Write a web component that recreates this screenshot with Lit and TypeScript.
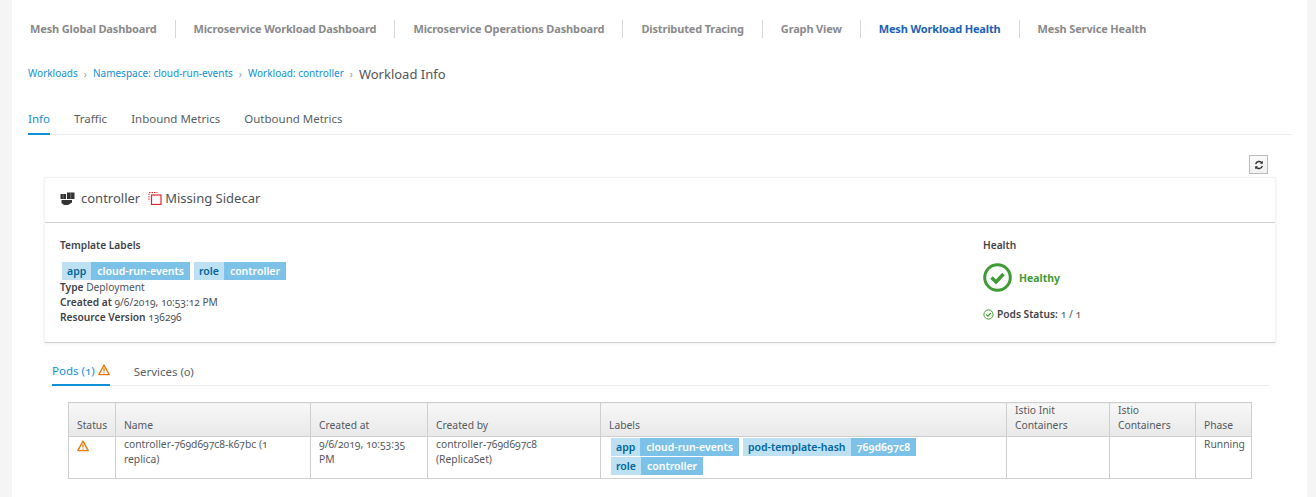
import { LitElement, css, html } from 'lit'
import { customElement } from 'lit/decorators.js'

const navItems = [
  'Mesh Global Dashboard',
  'Microservice Workload Dashboard',
  'Microservice Operations Dashboard',
  'Distributed Tracing',
  'Graph View',
  'Mesh Workload Health',
  'Mesh Service Health',
]

const warnIcon = (size: number) => html`
  <svg class="warn" width=${size} height=${size} viewBox="0 0 12 12">
    <path d="M6 1.2 11.2 10.6H.8Z" fill="#fff" stroke="#ec7a08" stroke-width="1.4" stroke-linejoin="round" />
    <path d="M6 4.2V7.6M6 8.4V9.6" stroke="#ec7a08" stroke-width="1.3" fill="none" />
  </svg>
`

const label = (k: string, v: string) => html`
  <span class="label"><span class="key">${k}</span><span class="val">${v}</span></span>
`

@customElement('app-root')
export class AppRoot extends LitElement {
  static styles = css`
    :host {
      display: block;
      height: 497px;
      overflow: hidden;
      background: #f5f5f5;
      font-family: "Noto Sans", "Open Sans", sans-serif;
      font-size: 11px;
      font-variant-numeric: oldstyle-nums;
      color: #4d5258;
    }
    .page {
      margin: 0 9px 0 12px;
      height: 497px;
      background: #fff;
      padding: 0 15px 0 16px;
      box-sizing: border-box;
    }
    .nav {
      display: flex;
      align-items: center;
      height: 18px;
      padding: 20px 0 0 2px;
    }
    .nav span {
      font-size: 11px;
      letter-spacing: -0.15px;
      font-weight: 700;
      color: #8a8a8a;
      padding: 0 18px;
      border-left: 1px solid #d8d8d8;
      line-height: 18px;
      white-space: nowrap;
    }
    .nav span:first-child {
      padding-left: 0;
      border-left: 0;
    }
    .nav span.active {
      color: #1a62b8;
    }
    .crumbs {
      display: flex;
      align-items: center;
      height: 20px;
      margin-top: 26px;
      font-size: 10px;
      color: #0f91d6;
    }
    .crumbs a {
      padding-bottom: 3px;
    }
    .crumbs i {
      font-style: normal;
      color: #9a9a9a;
      margin: 0 6px;
      font-size: 10px;
    }
    .crumbs b {
      font-weight: 400;
      font-size: 13px;
      color: #555;
    }
    .tabs {
      display: flex;
      height: 34px;
      margin-top: 16px;
      border-bottom: 1px solid #ececec;
      font-size: 11.5px;
      color: #5a5f64;
    }
    .tabs span {
      margin-right: 24px;
      line-height: 38px;
      box-sizing: border-box;
      height: 35px;
    }
    .tabs span.active {
      color: #0f91d6;
      border-bottom: 2px solid #0f91d6;
    }
    .tools {
      display: flex;
      justify-content: flex-end;
      padding: 20px 24px 0 0;
      height: 22px;
    }
    .refresh {
      width: 19px;
      height: 19px;
      box-sizing: border-box;
      border: 1px solid #bbb;
      background: linear-gradient(#fbfbfb, #f0f0f0);
      display: flex;
      align-items: center;
      justify-content: center;
    }
    .card {
      margin: 0 16px;
      height: 166px;
      box-sizing: border-box;
      border: 1px solid #f3f3f3;
      border-bottom: 1px solid #d2d2d2;
      box-shadow: 0 1px 3px rgba(0, 0, 0, 0.06);
    }
    .card-head {
      display: flex;
      align-items: center;
      height: 44px;
      padding-left: 15px;
      border-bottom: 1px solid #d0d0d0;
      font-size: 13px;
      color: #4d5258;
    }
    .card-head > * {
      margin-bottom: 4px;
    }
    .card-head .name {
      margin: 0 8px 4px 6px;
    }
    .card-head .missing {
      margin-left: 3px;
    }
    .card-body {
      display: flex;
      justify-content: space-between;
      padding: 15px 0 0 15px;
      font-size: 10.2px;
    }
    .heading {
      font-weight: 600;
      line-height: 15px;
      color: #3f4347;
    }
    .labels {
      margin: 9px 0 0 2px;
      display: flex;
      gap: 4px;
      flex-wrap: wrap;
    }
    .label {
      display: inline-flex;
      height: 18px;
      line-height: 18px;
      font-weight: 600;
      font-size: 10.5px;
    }
    .key {
      background: #bde0f3;
      color: #00659c;
      padding: 0 5px;
    }
    .val {
      background: #7cc2e8;
      color: #fff;
      padding: 0 6px;
    }
    .meta {
      line-height: 15px;
    }
    .meta b {
      font-weight: 600;
      color: #3f4347;
    }
    .health {
      width: 292px;
    }
    .healthy {
      display: flex;
      align-items: center;
      gap: 7px;
      margin-top: 10px;
      color: #3f9c35;
      font-weight: 700;
      font-size: 10.5px;
    }
    .pods {
      display: flex;
      align-items: center;
      gap: 3px;
      margin-top: 15px;
    }
    .pods b {
      font-weight: 600;
      color: #3f4347;
    }
    .subtabs {
      display: flex;
      height: 42px;
      margin: 0 23px 0 24px;
      border-bottom: 1px solid #ececec;
      font-size: 11.5px;
      color: #5a5f64;
    }
    .subtabs span {
      display: flex;
      align-items: center;
      gap: 3px;
      height: 43px;
      padding-top: 13px;
      box-sizing: border-box;
      margin-right: 24px;
    }
    .subtabs span.active {
      color: #0f91d6;
      border-bottom: 2px solid #0f91d6;
    }
    table {
      border-collapse: collapse;
      table-layout: fixed;
      width: 1183px;
      margin: 16px 0 0 40px;
      font-size: 10.3px;
      line-height: 15px;
      color: #55595e;
    }
    th,
    td {
      border: 1px solid #cfcfcf;
      padding: 0 8px;
      text-align: left;
      vertical-align: top;
      font-weight: 400;
    }
    th {
      height: 33px;
      vertical-align: bottom;
      padding-bottom: 3px;
      box-sizing: border-box;
      background: linear-gradient(#f7f7f7, #e9e9e9);
    }
    td {
      height: 42px;
      padding-top: 0;
      box-sizing: border-box;
    }
    td .labels {
      margin: 0;
      gap: 1px 4px;
    }
    td.labels-cell {
      padding: 1px 5px 0 10px;
    }
    td .warn {
      margin-top: 3px;
    }
  `

  render() {
    return html`
      <div class="page">
        <div class="nav">
          ${navItems.map(
            (n) => html`<span class=${n === 'Mesh Workload Health' ? 'active' : ''}>${n}</span>`,
          )}
        </div>
        <div class="crumbs">
          <a>Workloads</a><i>›</i><a>Namespace: cloud-run-events</a><i>›</i><a>Workload: controller</a><i>›</i><b>Workload Info</b>
        </div>
        <div class="tabs">
          <span class="active">Info</span><span>Traffic</span><span>Inbound Metrics</span><span>Outbound Metrics</span>
        </div>
        <div class="tools">
          <div class="refresh">
            <svg width="10" height="10" viewBox="0 0 12 12" fill="none" stroke="#333" stroke-width="1.7">
              <path d="M2 5A4.2 4.2 0 0 1 9.6 3.6" />
              <path d="M10 7A4.2 4.2 0 0 1 2.4 8.4" />
              <path d="M10.6 1V4.6H7.2Z M1.4 11V7.4H4.8Z" fill="#333" stroke="none" />
            </svg>
          </div>
        </div>
        <div class="card">
          <div class="card-head">
            <svg width="15" height="13" viewBox="0 0 15 13" fill="#333">
              <path d="M.5 2H6V7H.5Z" />
              <path d="M7 .5H14.5V7H7Z" />
              <path d="M1.5 8H12V10.5L8 13H4L1.5 11Z" />
              <path d="M3.2 2.2V6.8M10.7.7V6.8" stroke="#999" stroke-width="0.6" />
            </svg>
            <span class="name">controller</span>
            <svg width="14" height="14" viewBox="0 0 14 14" fill="none" stroke="#e8232a">
              <path d="M1 9V1.5H9.5" stroke-dasharray="1.5 1" />
              <rect x="3.5" y="4" width="9.5" height="9.5" stroke-width="1.2" />
            </svg>
            <span class="missing">Missing Sidecar</span>
          </div>
          <div class="card-body">
            <div>
              <div class="heading">Template Labels</div>
              <div class="labels">${label('app', 'cloud-run-events')}${label('role', 'controller')}</div>
              <div class="meta">
                <div><b>Type</b> Deployment</div>
                <div><b>Created at</b> 9/6/2019, 10:53:12 PM</div>
                <div><b>Resource Version</b> 136296</div>
              </div>
            </div>
            <div class="health">
              <div class="heading">Health</div>
              <div class="healthy">
                <svg width="29" height="29" viewBox="0 0 29 29" fill="none" stroke="#3f9c35">
                  <circle cx="14.5" cy="14.5" r="12.8" stroke-width="3" />
                  <path d="M8.5 14.5 13 19 20.5 11" stroke-width="3.4" />
                </svg>
                Healthy
              </div>
              <div class="pods">
                <svg width="11" height="11" viewBox="0 0 11 11" fill="none" stroke="#3f9c35">
                  <circle cx="5.5" cy="5.5" r="4.6" />
                  <path d="M3.2 5.6 4.9 7.2 7.8 4" stroke-width="1.2" />
                </svg>
                <b>Pods Status:</b> 1 / 1
              </div>
            </div>
          </div>
        </div>
        <div class="subtabs">
          <span class="active">Pods (1) ${warnIcon(12)}</span><span>Services (0)</span>
        </div>
        <table>
          <colgroup>
            <col style="width:47px" />
            <col style="width:195px" />
            <col style="width:117px" />
            <col style="width:173px" />
            <col style="width:406px" />
            <col style="width:103px" />
            <col style="width:86px" />
            <col style="width:56px" />
          </colgroup>
          <tr>
            <th>Status</th>
            <th>Name</th>
            <th>Created at</th>
            <th>Created by</th>
            <th>Labels</th>
            <th>Istio Init Containers</th>
            <th>Istio Containers</th>
            <th>Phase</th>
          </tr>
          <tr>
            <td>${warnIcon(12)}</td>
            <td>controller-769d697c8-k67bc (1 replica)</td>
            <td>9/6/2019, 10:53:35 PM</td>
            <td>controller-769d697c8 (ReplicaSet)</td>
            <td class="labels-cell">
              <div class="labels">
                ${label('app', 'cloud-run-events')}${label('pod-template-hash', '769d697c8')}${label('role', 'controller')}
              </div>
            </td>
            <td></td>
            <td></td>
            <td>Running</td>
          </tr>
        </table>
      </div>
    `
  }
}
